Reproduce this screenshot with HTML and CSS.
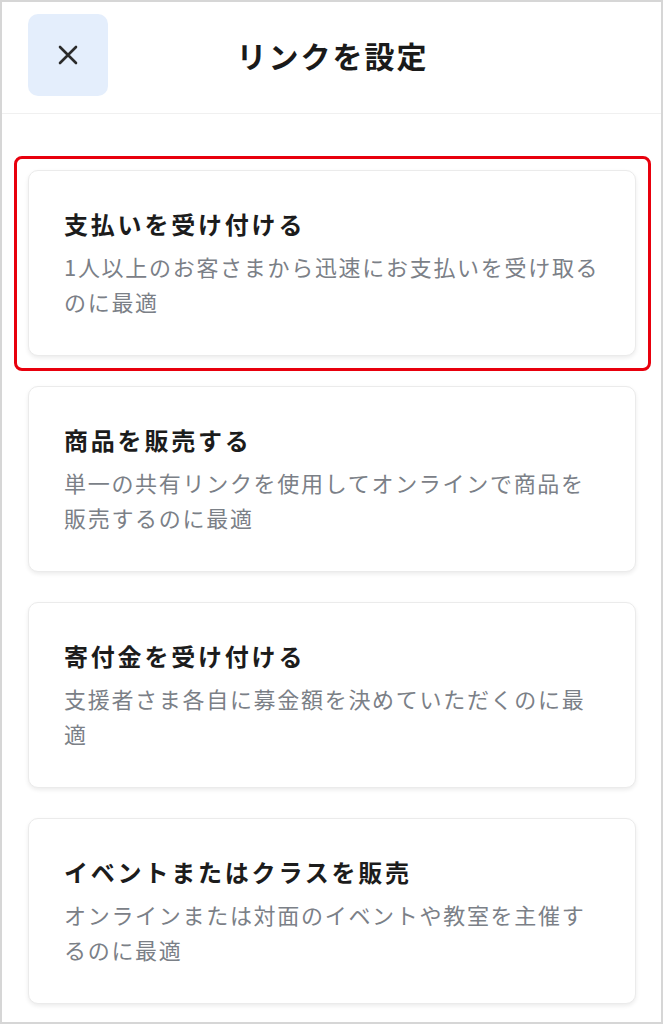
FILE: index.html
```html
<!DOCTYPE html>
<html lang="ja">
<head>
<meta charset="utf-8">
<title>リンクを設定</title>
<link rel="stylesheet" href="styles.css">
</head>
<body>
<div class="frame">
  <header class="header">
    <button class="close" aria-label="閉じる">
      <svg width="20" height="20" viewBox="0 0 20 20"><path d="M2 2 L18 18 M18 2 L2 18" stroke="#2b2b2b" stroke-width="2.6" stroke-linecap="round" fill="none"/></svg>
    </button>
    <h1 class="title">リンクを設定</h1>
  </header>
  <main class="list">
    <div class="card selected">
      <h2 class="card-title">支払いを受け付ける</h2>
      <p class="card-desc">1人以上のお客さまから迅速にお支払いを受け取るのに最適</p>
    </div>
    <div class="card">
      <h2 class="card-title">商品を販売する</h2>
      <p class="card-desc">単一の共有リンクを使用してオンラインで商品を販売するのに最適</p>
    </div>
    <div class="card">
      <h2 class="card-title">寄付金を受け付ける</h2>
      <p class="card-desc">支援者さま各自に募金額を決めていただくのに最適</p>
    </div>
    <div class="card">
      <h2 class="card-title">イベントまたはクラスを販売</h2>
      <p class="card-desc">オンラインまたは対面のイベントや教室を主催するのに最適</p>
    </div>
  </main>
</div>
</body>
</html>
```
FILE: styles.css
```css
* { box-sizing: border-box; }
html, body { margin: 0; padding: 0; background: #fff; }
body {
  font-family: "Noto Sans CJK JP", "Noto Sans", sans-serif;
  color: #1c1c1c;
}
.frame {
  width: 663px;
  height: 1024px;
  border: 2px solid #d6d6d6;
  overflow: hidden;
}
.header {
  display: grid;
  grid-template-columns: 1fr auto 1fr;
  align-items: center;
  padding: 12px 26px 17px 26px;
  border-bottom: 1px solid #f0f0f0;
}
.close {
  grid-column: 1;
  width: 80px;
  height: 82px;
  border: none;
  border-radius: 10px;
  background: #e4eefc;
  display: flex;
  align-items: center;
  justify-content: center;
  padding: 0;
  justify-self: start;
}
.title {
  grid-column: 2;
  margin: 0;
  font-size: 30px;
  font-weight: 700;
  letter-spacing: 2px;
  line-height: 40px;
  color: #1a1a1a;
  padding-left: 2px;
}
.list {
  display: flex;
  flex-direction: column;
  gap: 30px;
  padding: 56px 25px 0 26px;
}
.card {
  position: relative;
  background: #fff;
  border: 1px solid #ebebeb;
  border-radius: 10px;
  box-shadow: 0 2px 4px rgba(0, 0, 0, 0.08);
  padding: 36px 30px 36px 35px;
}
.card.selected::after {
  content: "";
  position: absolute;
  inset: -15px -16px -16px -15px;
  border: 3px solid #e8000d;
  border-radius: 8px;
  pointer-events: none;
}
.card-title {
  margin: 0;
  font-size: 24px;
  font-weight: 700;
  letter-spacing: 2.8px;
  line-height: 34px;
  color: #1c1c1c;
}
.card-desc {
  margin: 8px 0 0 0;
  font-size: 22px;
  font-weight: 400;
  letter-spacing: 1.7px;
  line-height: 35px;
  color: #7b8087;
}
```
